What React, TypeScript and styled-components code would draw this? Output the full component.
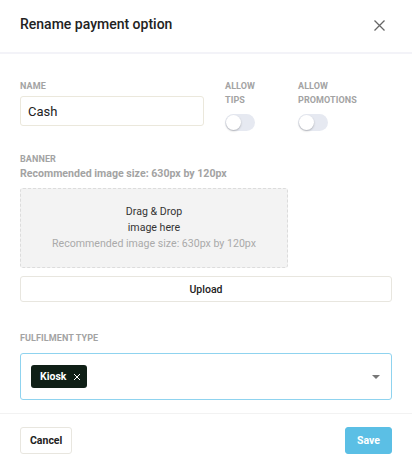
import styled, { createGlobalStyle } from "styled-components";

const GlobalStyle = createGlobalStyle`
  html, body {
    margin: 0;
    padding: 0;
    background: #ffffff;
    font-family: Roboto, "Liberation Sans", sans-serif;
  }
  * {
    box-sizing: border-box;
  }
`;

const Modal = styled.div`
  width: 412px;
  height: 468px;
  background: #fff;
  display: flex;
  flex-direction: column;
`;

const Header = styled.div`
  height: 54px;
  padding: 0 20px;
  display: flex;
  align-items: center;
  justify-content: space-between;
  border-bottom: 2px solid #f3f3f8;
`;

const Title = styled.h1`
  margin: 0 0 4px;
  font-size: 14px;
  font-weight: 500;
  color: #222;
`;

const CloseButton = styled.button`
  border: none;
  background: none;
  padding: 0;
  margin: 0 7px 2px 0;
  display: flex;
  cursor: pointer;
`;

const Body = styled.div`
  padding: 25px 20px 13px;
  display: flex;
  flex-direction: column;
`;

const Row = styled.div`
  display: flex;
  align-items: flex-start;
`;

const Field = styled.div<{ $width?: number }>`
  display: flex;
  flex-direction: column;
  width: ${(p) => (p.$width ? `${p.$width}px` : "auto")};
  flex: ${(p) => (p.$width ? "none" : "1")};
`;

const Label = styled.label`
  font-size: 9px;
  font-weight: 700;
  color: #a3a3a3;
  line-height: 14px;
  text-transform: uppercase;
  letter-spacing: 0.1px;
`;

const Hint = styled.div`
  font-size: 10.6px;
  font-weight: 700;
  color: #a3a3a3;
  line-height: 15px;
  margin-bottom: 7px;
`;

const TextInput = styled.input`
  margin-top: 3px;
  height: 30px;
  border: 1px solid #ebe8dc;
  border-radius: 3px;
  padding: 0 7px;
  font-family: inherit;
  font-size: 13px;
  color: #222;
  outline: none;
`;

const Toggle = styled.div<{ $on?: boolean }>`
  margin-top: 7px;
  width: 30px;
  height: 17px;
  border-radius: 9px;
  background: ${(p) => (p.$on ? "#5bbfe5" : "#e6e9f1")};
  position: relative;

  &::after {
    content: "";
    position: absolute;
    top: 1px;
    left: ${(p) => (p.$on ? "14px" : "1px")};
    width: 15px;
    height: 15px;
    border-radius: 50%;
    background: #fff;
    box-shadow: 0 1px 2px rgba(0, 0, 0, 0.25);
  }
`;

const Section = styled.div<{ $top: number }>`
  margin-top: ${(p) => p.$top}px;
  display: flex;
  flex-direction: column;
`;

const DropZone = styled.div`
  width: 268px;
  height: 80px;
  background: #f3f3f3;
  border: 1px dashed #dcdcdc;
  border-radius: 3px;
  display: flex;
  flex-direction: column;
  align-items: center;
  justify-content: center;
  font-size: 10.6px;
  line-height: 16px;
  color: #333;
`;

const Muted = styled.span`
  color: #aaa;
`;

const Button = styled.button<{ $primary?: boolean }>`
  height: 27px;
  min-width: 47px;
  padding: 0 9px;
  border-radius: 3px;
  font-family: inherit;
  font-size: 10.5px;
  font-weight: 700;
  cursor: pointer;
  border: 1px solid ${(p) => (p.$primary ? "#5bbfe5" : "#e8e6df")};
  background: ${(p) => (p.$primary ? "#5bbfe5" : "#fff")};
  color: ${(p) => (p.$primary ? "#fff" : "#222")};
`;

const WideButton = styled(Button)`
  margin-top: 8px;
  width: 100%;
  height: 26px;
  font-weight: 500;
`;

const Select = styled.div`
  margin-top: 8px;
  height: 47px;
  border: 1px solid #8fd3ef;
  border-radius: 3px;
  padding: 0 11px 0 10px;
  display: flex;
  align-items: center;
  justify-content: space-between;
`;

const Chip = styled.span`
  height: 23px;
  padding: 0 6px 0 9px;
  background: #0f1f16;
  border-radius: 3px;
  color: #fff;
  font-size: 10.5px;
  font-weight: 700;
  display: inline-flex;
  align-items: center;
  gap: 7px;
`;

const Caret = styled.span`
  width: 0;
  height: 0;
  border-left: 4px solid transparent;
  border-right: 4px solid transparent;
  border-top: 4px solid #777;
`;

const Footer = styled.div`
  border-top: 1px solid #f2f2f2;
  padding: 13px 20px;
  display: flex;
  justify-content: space-between;
`;

const App = () => {
  return (
    <>
      <GlobalStyle />
      <Modal>
        <Header>
          <Title>Rename payment option</Title>
          <CloseButton aria-label="Close">
            <svg width="11" height="11" viewBox="0 0 11 11">
              <path d="M0.5 0.5L10.5 10.5M10.5 0.5L0.5 10.5" stroke="#666" strokeWidth="1.3" />
            </svg>
          </CloseButton>
        </Header>
        <Body>
          <Row>
            <Field $width={184}>
              <Label>Name</Label>
              <TextInput defaultValue="Cash" />
            </Field>
            <Field $width={73} style={{ marginLeft: 21 }}>
              <Label>
                Allow
                <br />
                Tips
              </Label>
              <Toggle />
            </Field>
            <Field>
              <Label>
                Allow
                <br />
                Promotions
              </Label>
              <Toggle />
            </Field>
          </Row>

          <Section $top={21}>
            <Label>Banner</Label>
            <Hint>Recommended image size: 630px by 120px</Hint>
            <DropZone>
              <span>Drag &amp; Drop</span>
              <span>image here</span>
              <Muted>Recommended image size: 630px by 120px</Muted>
            </DropZone>
            <WideButton>Upload</WideButton>
          </Section>

          <Section $top={29}>
            <Label>Fulfilment type</Label>
            <Select>
              <Chip>
                Kiosk
                <svg width="8" height="8" viewBox="0 0 8 8">
                  <path d="M1 1L7 7M7 1L1 7" stroke="#fff" strokeWidth="1" />
                </svg>
              </Chip>
              <Caret />
            </Select>
          </Section>
        </Body>
        <Footer>
          <Button>Cancel</Button>
          <Button $primary>Save</Button>
        </Footer>
      </Modal>
    </>
  );
};

export default App;
